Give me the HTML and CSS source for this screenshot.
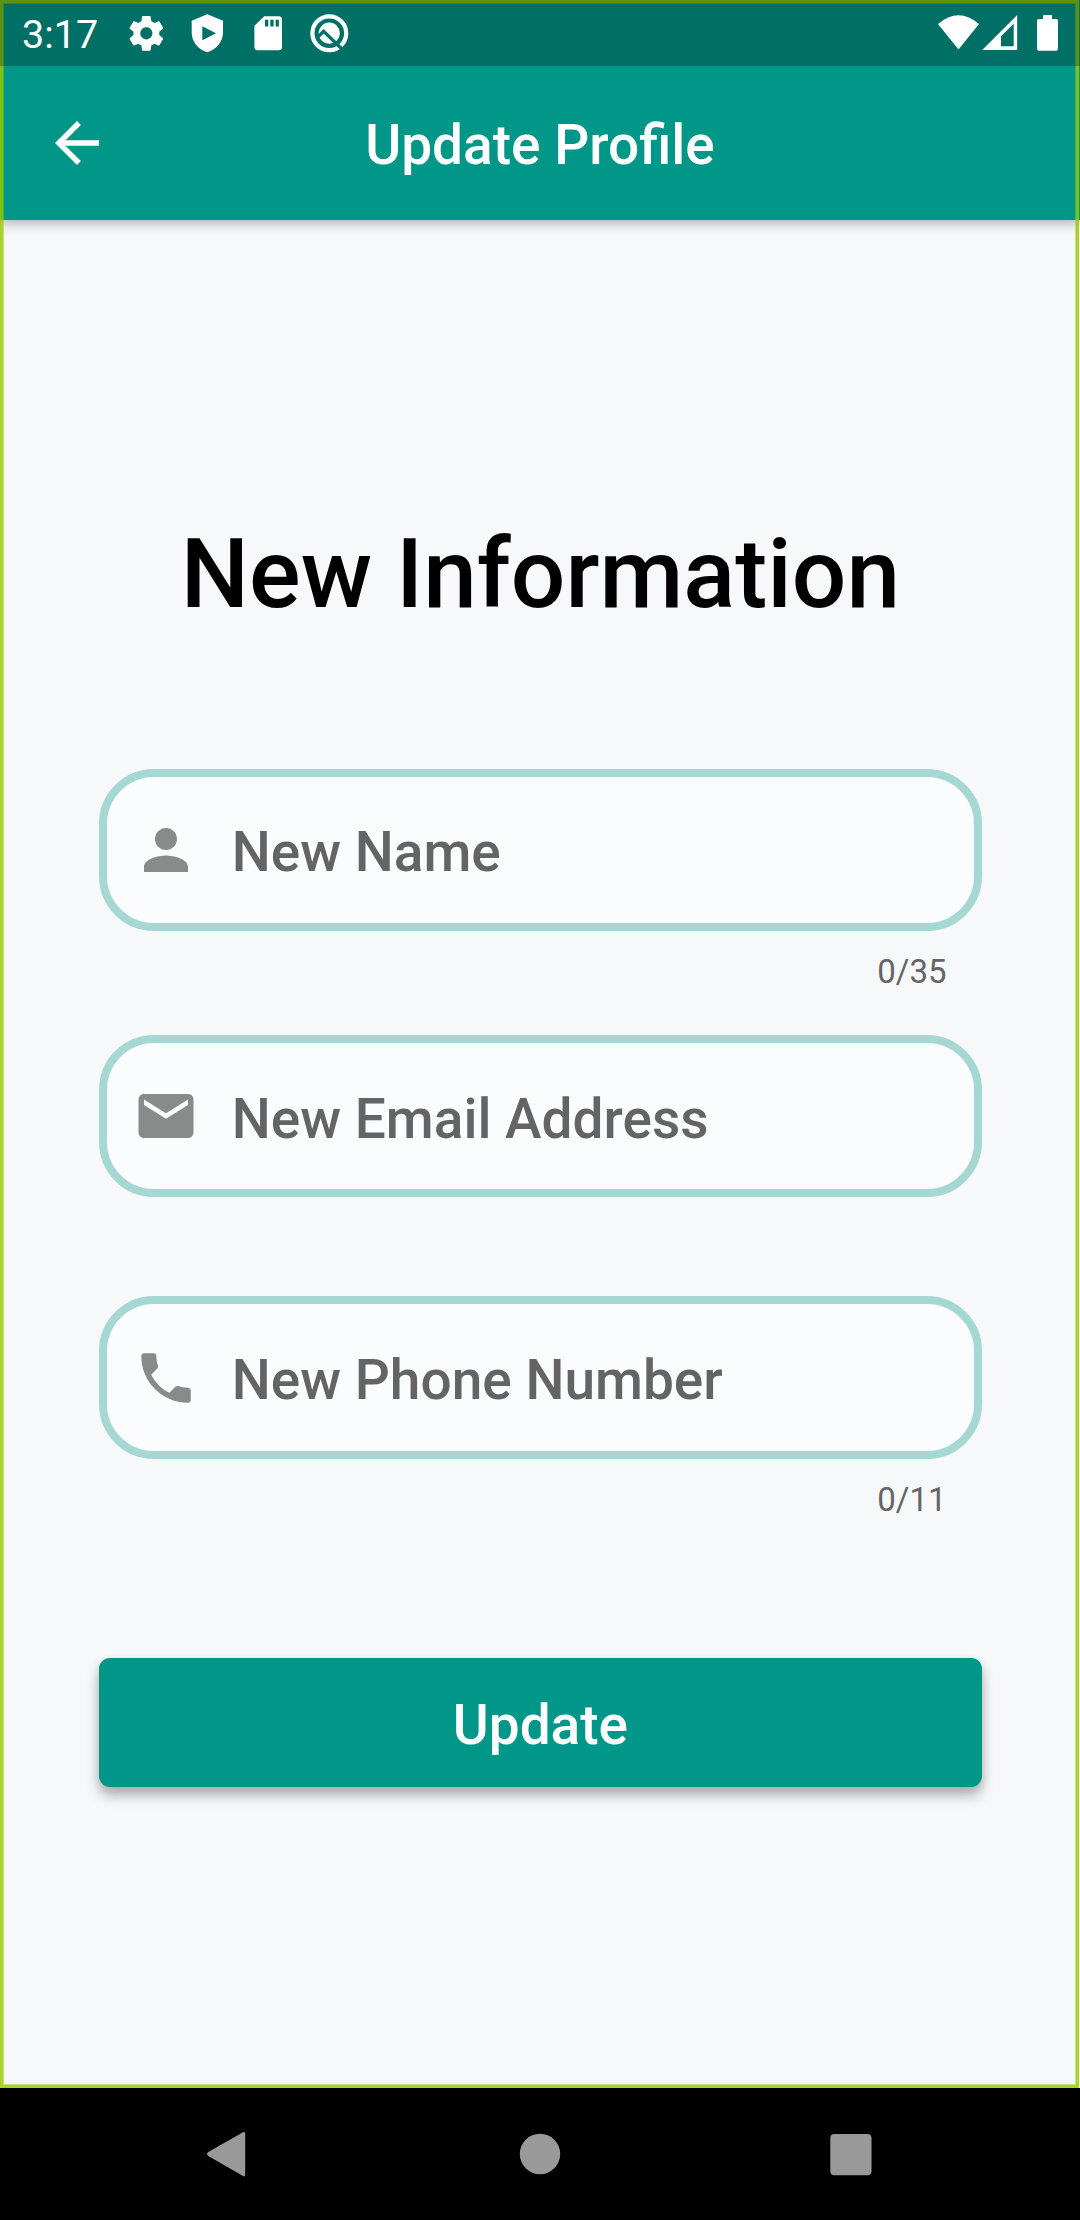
FILE: index.html
```html
<!DOCTYPE html>
<html lang="en">
<head>
<meta charset="utf-8">
<title>Update Profile</title>
<link rel="stylesheet" href="styles.css">
</head>
<body>
<div class="screen">
  <div class="app">
    <header class="appbar">
      <svg class="icon back" viewBox="0 0 24 24"><path d="M20 11H7.83l5.59-5.59L12 4l-8 8 8 8 1.41-1.41L7.83 13H20z"/></svg>
      <h1 class="title">Update Profile</h1>
    </header>
    <main class="content">
      <h2 class="heading">New Information</h2>
      <form class="form">
        <div class="group group-name">
          <label class="field">
            <svg class="icon" viewBox="0 0 24 24"><path d="M12 12c2.21 0 4-1.79 4-4s-1.79-4-4-4-4 1.79-4 4 1.79 4 4 4zm0 2c-2.67 0-8 1.34-8 4v2h16v-2c0-2.66-5.33-4-8-4z"/></svg>
            <span class="hint">New Name</span>
          </label>
          <div class="counter">0/35</div>
        </div>
        <div class="group group-email">
          <label class="field">
            <svg class="icon" viewBox="0 0 24 24"><path d="M20 4H4c-1.1 0-1.99.9-1.99 2L2 18c0 1.1.9 2 2 2h16c1.1 0 2-.9 2-2V6c0-1.1-.9-2-2-2zm0 4l-8 5-8-5V6l8 5 8-5v2z"/></svg>
            <span class="hint">New Email Address</span>
          </label>
        </div>
        <div class="group group-phone">
          <label class="field">
            <svg class="icon" viewBox="0 0 24 24"><path d="M6.62 10.79c1.44 2.83 3.76 5.14 6.59 6.59l2.2-2.2c.27-.27.67-.36 1.02-.24 1.12.37 2.33.57 3.57.57.55 0 1 .45 1 1V20c0 .55-.45 1-1 1-9.39 0-17-7.61-17-17 0-.55.45-1 1-1h3.5c.55 0 1 .45 1 1 0 1.25.2 2.45.57 3.57.11.35.03.74-.25 1.02l-2.2 2.2z"/></svg>
            <span class="hint">New Phone Number</span>
          </label>
          <div class="counter">0/11</div>
        </div>
        <button class="submit" type="button">Update</button>
      </form>
    </main>
    <div class="outline"></div>
    <div class="statusbar">
      <span class="time">3:17</span>
      <svg class="notifications" viewBox="0 0 230 66">
        <path transform="translate(5.6 12.6) scale(1.73)" d="M19.43 12.98c.04-.32.07-.64.07-.98s-.03-.66-.07-.98l2.11-1.65c.19-.15.24-.42.12-.64l-2-3.46c-.12-.22-.39-.3-.61-.22l-2.49 1c-.52-.4-1.08-.73-1.69-.98l-.38-2.65C14.46 2.18 14.25 2 14 2h-4c-.25 0-.46.18-.49.42l-.38 2.65c-.61.25-1.17.59-1.69.98l-2.49-1c-.23-.09-.49 0-.61.22l-2 3.46c-.13.22-.07.49.12.64l2.11 1.65c-.04.32-.07.65-.07.98s.03.66.07.98l-2.11 1.65c-.19.15-.24.42-.12.64l2 3.46c.12.22.39.3.61.22l2.49-1c.52.4 1.08.73 1.69.98l.38 2.65c.03.24.24.42.49.42h4c.25 0 .46-.18.49-.42l.38-2.65c.61-.25 1.17-.59 1.69-.98l2.49 1c.23.09.49 0 .61-.22l2-3.46c.12-.22.07-.49-.12-.64l-2.11-1.65zM12 15.5c-1.93 0-3.5-1.57-3.5-3.5s1.57-3.5 3.5-3.5 3.5 1.57 3.5 3.5-1.57 3.5-3.5 3.5z"/>
        <path fill-rule="evenodd" d="M87.300 14.300L103 20.800V32C103 42 96.500 49.500 87.300 52.300C78 49.500 71.700 42 71.700 32V20.800ZM82.300 26.300V40.200L96 33.300Z"/>
        <path fill-rule="evenodd" d="M144.300 16.300H158.800Q162 16.300 162 19.500V47Q162 50.200 158.800 50.200H137.600Q134.400 50.200 134.400 47V25.800ZM145 19.800V26.600H148.300V19.800ZM150.300 19.800V26.600H153.600V19.800ZM155.600 19.800V26.600H158.900V19.800Z"/>
        <circle class="ring" cx="209.300" cy="33.200" r="16.900"/>
        <circle cx="209.300" cy="33.200" r="10.600"/>
        <path class="slash" d="M197.800 37.200L203.600 31.300L223 50"/>
      </svg>
      <svg class="system" viewBox="0 0 142 66">
        <path d="M0 24Q20.500 6.500 41 24L20.500 49.500Z"/>
        <path fill-rule="evenodd" d="M79.200 15V50H44.200ZM75.700 23.700L63 36.200V46.200H75.700Z"/>
        <path d="M105 15H114V19H118.200Q120 19 120 20.800V49Q120 50.800 118.200 50.800H100.800Q99 50.800 99 49V20.800Q99 19 100.800 19H105Z"/>
      </svg>
    </div>
  </div>
  <nav class="navbar">
    <svg viewBox="0 0 48 48"><path d="M38 2.300Q40.200 1 40.200 4V44.300Q40.200 47.300 38 46L3.300 26Q.8 24 3.300 22Z"/></svg>
    <svg viewBox="0 0 48 48"><circle cx="24" cy="24" r="20.200"/></svg>
    <svg viewBox="0 0 48 48"><rect x="3.300" y="4" width="41.200" height="41.300" rx="4"/></svg>
  </nav>
</div>
</body>
</html>
```
FILE: styles.css
```css
* {
  box-sizing: border-box;
}

body {
  margin: 0;
  font-family: Roboto, "Liberation Sans", sans-serif;
}

svg {
  display: block;
  fill: currentColor;
}

.screen {
  display: flex;
  flex-direction: column;
  width: 1080px;
  height: 2220px;
  overflow: hidden;
}

.app {
  position: relative;
  display: flex;
  flex-direction: column;
  flex: 1;
  background: #f7f8fa;
}

.appbar {
  position: relative;
  display: grid;
  grid-template-columns: 110px 1fr 110px;
  align-items: center;
  height: 220px;
  padding-top: 66px;
  background: #009688;
  color: #fff;
  box-shadow: 0 5px 11px rgba(0, 0, 0, 0.2), 0 1px 8px rgba(0, 0, 0, 0.1);
}

.icon {
  width: 66px;
  height: 66px;
  flex: none;
}

.back {
  margin-left: 44px;
}

.title {
  margin: 4px 0 0;
  font-size: 55px;
  font-weight: 500;
  line-height: 64px;
  text-align: center;
}

.content {
  display: flex;
  flex-direction: column;
  padding: 298px 98.500px 0 99.300px;
}

.heading {
  margin: 0;
  color: #000;
  font-size: 96.250px;
  font-weight: 500;
  line-height: 113px;
  text-align: center;
}

.form {
  display: flex;
  flex-direction: column;
  margin-top: 137.600px;
}

.group-name {
  height: 266.400px;
}

.group-email {
  height: 261.400px;
}

.group-phone {
  height: 362px;
}

.field {
  display: flex;
  align-items: center;
  gap: 33px;
  height: 162.500px;
  padding-left: 25.500px;
  border: 8.250px solid #a6d8d3;
  border-radius: 55px;
  background: #fbfcfe;
  color: #898b8a;
}

.hint {
  margin-top: 5px;
  color: #646464;
  font-size: 55px;
  font-weight: 500;
  line-height: 64px;
  white-space: nowrap;
}

.counter {
  margin-top: 21px;
  padding-right: 35px;
  color: #646566;
  font-size: 33px;
  line-height: 40px;
  text-align: right;
}

.submit {
  height: 129px;
  padding: 5px 0 0;
  border: 0;
  border-radius: 11px;
  background: #009688;
  color: #fff;
  font: 500 55px/64px Roboto, "Liberation Sans", sans-serif;
  text-align: center;
  box-shadow: 0 9px 13px rgba(0, 0, 0, 0.26), 0 3px 10px rgba(0, 0, 0, 0.1);
}

/* Focus outline drawn over the whole app surface */
.outline {
  position: absolute;
  inset: 0 1px 0 0;
  border: 3px solid rgba(150, 204, 0, 0.83);
  box-shadow: inset 0 0 0 1px rgba(150, 204, 0, 0.5);
}

.statusbar {
  position: absolute;
  inset: 0 0 auto;
  display: flex;
  height: 66px;
  padding-left: 22px;
  background: rgba(0, 0, 0, 0.25);
  color: #fff;
}

.time {
  width: 98px;
  font-size: 39.500px;
  line-height: 69px;
}

.notifications {
  width: 230px;
  height: 66px;
}

.ring,
.slash {
  fill: none;
  stroke: #fff;
  stroke-width: 4.200;
}

.slash {
  stroke: #007166;
  stroke-width: 3.200;
}

.system {
  width: 142px;
  height: 66px;
  margin-left: auto;
}

.navbar {
  display: flex;
  align-items: center;
  justify-content: space-between;
  height: 132px;
  padding: 0 205px;
  background: #000;
  color: #999;
}

.navbar svg {
  width: 48px;
  height: 48px;
}
```
